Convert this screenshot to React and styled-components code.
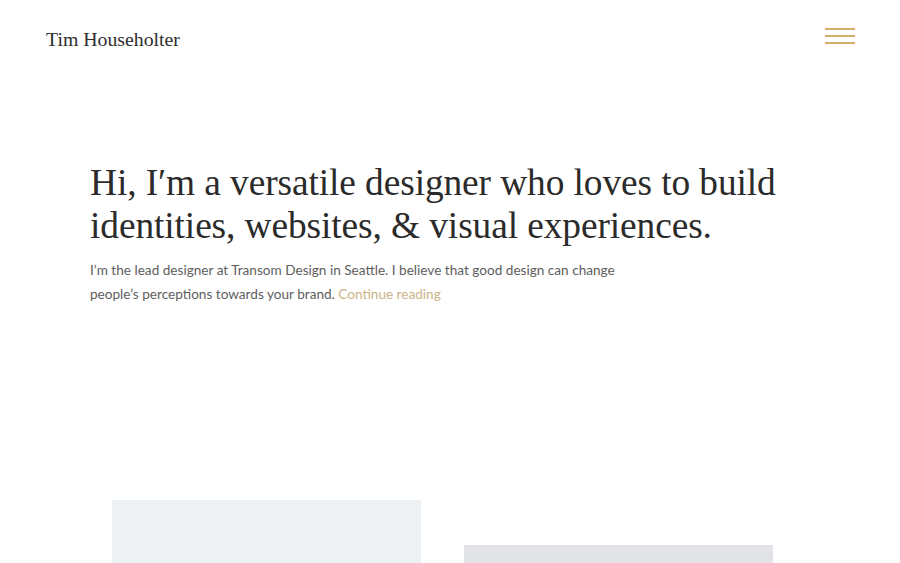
import React from 'react';
import styled, { createGlobalStyle } from 'styled-components';

const GlobalStyle = createGlobalStyle`
  html, body {
    margin: 0;
    padding: 0;
    background: #fff;
  }
  body {
    font-family: 'Lato', 'Liberation Sans', sans-serif;
    overflow: hidden;
  }
`;

const Page = styled.div`
  width: 900px;
  height: 563px;
  overflow: hidden;
`;

const Header = styled.header`
  display: flex;
  justify-content: space-between;
  align-items: center;
  padding: 27px 45px 0 46px;
  height: 24px;
`;

const Logo = styled.a`
  font-family: 'Liberation Serif', serif;
  font-size: 19.8px;
  color: #2e2e2e;
  text-decoration: none;
`;

const MenuButton = styled.button`
  display: flex;
  flex-direction: column;
  gap: 5px;
  width: 30px;
  margin-top: -7px;
  padding: 0;
  border: 0;
  background: none;
  span {
    display: block;
    height: 2px;
    background: #d2b06a;
  }
`;

const Hero = styled.section`
  padding: 110px 0 0 90px;
`;

const Heading = styled.h1`
  margin: 0;
  font-family: 'Liberation Serif', serif;
  font-weight: normal;
  font-size: 37.4px;
  line-height: 43px;
  color: #2b2b2b;
  letter-spacing: -0.1px;
`;

const Intro = styled.p`
  margin: 11px 0 0;
  font-size: 13.6px;
  line-height: 24px;
  color: #5e5e5e;
  a {
    color: #cbb487;
    text-decoration: none;
  }
`;

const Work = styled.section`
  display: flex;
  gap: 43px;
  padding: 0 0 0 112px;
  margin-top: 194px;
`;

const Card = styled.div`
  width: 309px;
  height: 200px;
  margin-top: ${p => p.offset}px;
  background: ${p => p.bg};
`;

export default function App() {
  return (
    <Page>
      <GlobalStyle />
      <Header>
        <Logo href="#">Tim Householter</Logo>
        <MenuButton aria-label="menu">
          <span />
          <span />
          <span />
        </MenuButton>
      </Header>
      <Hero>
        <Heading>
          Hi, I′m a versatile designer who loves to build
          <br />
          identities, websites, &amp; visual experiences.
        </Heading>
        <Intro>
          I’m the lead designer at Transom Design in Seattle. I believe that good design can change
          <br />
          people’s perceptions towards your brand. <a href="#">Continue reading</a>
        </Intro>
      </Hero>
      <Work>
        <Card bg="#eef1f4" offset={0} />
        <Card bg="#e2e3e6" offset={45} />
      </Work>
    </Page>
  );
}
